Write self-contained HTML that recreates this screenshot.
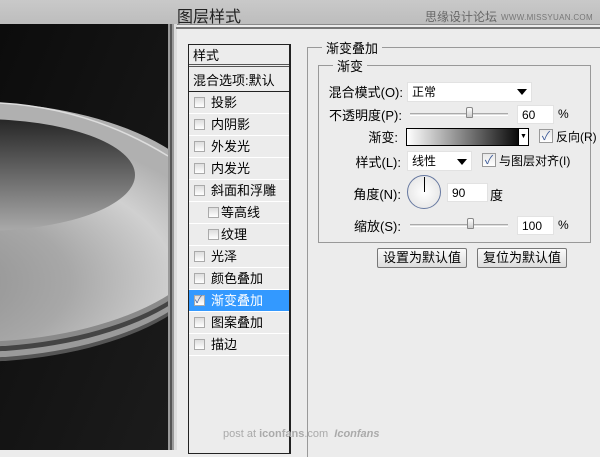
<!DOCTYPE html>
<html><head><meta charset="utf-8"><style>
*{margin:0;padding:0;box-sizing:border-box}
body{width:600px;height:450px;overflow:hidden;background:#ececec;font-family:"Liberation Sans","Noto Sans CJK SC",sans-serif;font-size:13px;color:#000;position:relative}
.abs{position:absolute}
.top{left:0;top:0;width:600px;height:25px;background:linear-gradient(#c9c9c9,#bdbdbd);border-bottom:1px solid #8a8a8a}
.title{left:177px;top:3px;font-size:16px;color:#222}
.wm{left:425px;top:8px;font-size:12px;color:#666}
.wm2{left:501px;top:13px;font-size:8px;color:#777;letter-spacing:.3px}
.list{left:188px;top:44px;width:103px;height:410px;border:1px solid #222;border-right:2px solid #222;background:#ececec}
.it{position:absolute;left:0;width:100px;height:22px;border-bottom:1px solid #fff;line-height:21px;padding-left:22px;font-size:13px}
.cb{position:absolute;left:5px;top:5px;width:11px;height:11px;border:1px solid #aaa;background:linear-gradient(#ddd,#fff)}
.sub{padding-left:32px}.sub .cb{left:19px}
.sel{background:#3399ff;color:#fff}
.fs{border:1px solid #999}
.lbl{position:absolute;background:#ececec;padding:0 4px;font-size:13px}
.r{position:absolute;text-align:right;font-size:13px;left:290px;margin-top:-2px}
.inp{position:absolute;background:#fff;border:1px solid #e2e2e2;font-size:12px;padding-left:4px;line-height:18px}
.tri{position:absolute;width:0;height:0;border-left:5px solid transparent;border-right:5px solid transparent;border-top:6px solid #000}
.slider{position:absolute;height:3px;border-top:1px solid #aaa;border-bottom:1px solid #fff;background:#ddd}
.thumb{position:absolute;width:7px;height:11px;background:linear-gradient(#fff,#ccc);border:1px solid #888;border-radius:2px 2px 1px 1px}
.btn{position:absolute;height:20px;border:1px solid #777;border-radius:2px;background:linear-gradient(#fafafa,#ddd);font-size:13px;text-align:center;line-height:18px}
.chk{position:absolute;width:14px;height:14px;border:1px solid #999;background:linear-gradient(#e8e8e8,#fff);color:#3b5998;font-size:12px;line-height:12px;text-align:center}
</style></head><body>
<div class="abs top"></div>
<div class="abs title">图层样式</div>
<div class="abs wm">思缘设计论坛</div>
<div class="abs wm2">WWW.MISSYUAN.COM</div>
<svg class="abs" style="left:0;top:24px" width="177" height="426">
<defs>
<linearGradient id="bg" x1="0" y1="0" x2="1" y2="1"><stop offset="0" stop-color="#0c0c0c"/><stop offset="1" stop-color="#1c1c1c"/></linearGradient>
<radialGradient id="topd" cx=".35" cy=".75" r=".7"><stop offset="0" stop-color="#888"/><stop offset=".5" stop-color="#a8a8a8"/><stop offset=".8" stop-color="#d0d0d0"/><stop offset="1" stop-color="#b0b0b0"/></radialGradient>
<linearGradient id="inner" x1="0" y1="0" x2="0" y2="1"><stop offset="0" stop-color="#262626"/><stop offset="1" stop-color="#aaaaaa"/></linearGradient>
</defs>
<rect width="177" height="426" fill="url(#bg)"/>
<ellipse cx="-30" cy="218" rx="252" ry="120" fill="#555"/>
<ellipse cx="-30" cy="214" rx="252" ry="120" fill="#9a9a9a"/>
<ellipse cx="-30" cy="208" rx="252" ry="120" fill="#444"/>
<ellipse cx="-30" cy="203" rx="252" ry="120" fill="#8a8a8a"/>
<ellipse cx="-30" cy="198" rx="250" ry="120" fill="url(#topd)"/>
<path d="M0 79 Q90 84 168 132" stroke="#ddd" stroke-width="1.5" fill="none"/>
<ellipse cx="-20" cy="151" rx="155" ry="56" fill="url(#inner)"/>
<rect x="168" y="0" width="9" height="426" fill="#9a9a9a"/>
<rect x="170" y="0" width="2" height="426" fill="#555"/>
<rect x="174" y="0" width="3" height="426" fill="#ddd"/>
</svg>
<div class="abs" style="left:176px;top:27px;width:424px;height:2px;background:#777"></div>
<div class="abs list">
<div class="it" style="top:0;padding-left:4px;height:22px;border-bottom:3px double #555">样式</div>
<div class="it" style="top:25px;padding-left:4px;border-bottom:1px solid #222">混合选项:默认</div>
<div class="it" style="top:47px"><span class="cb"></span>投影</div>
<div class="it" style="top:69px"><span class="cb"></span>内阴影</div>
<div class="it" style="top:91px"><span class="cb"></span>外发光</div>
<div class="it" style="top:113px"><span class="cb"></span>内发光</div>
<div class="it" style="top:135px"><span class="cb"></span>斜面和浮雕</div>
<div class="it sub" style="top:157px"><span class="cb"></span>等高线</div>
<div class="it sub" style="top:179px"><span class="cb"></span>纹理</div>
<div class="it" style="top:201px"><span class="cb"></span>光泽</div>
<div class="it" style="top:223px"><span class="cb"></span>颜色叠加</div>
<div class="it sel" style="top:245px"><span class="cb" style="color:#3b5998;font-size:10px;line-height:9px">✓</span>渐变叠加</div>
<div class="it" style="top:267px"><span class="cb"></span>图案叠加</div>
<div class="it" style="top:289px"><span class="cb"></span>描边</div>
</div>
<div class="abs" style="left:307px;top:47px;width:300px;height:410px;border-left:1px solid #999;border-top:1px solid #999"></div>
<div class="lbl" style="left:322px;top:38px">渐变叠加</div>
<div class="abs fs" style="left:318px;top:65px;width:273px;height:178px"></div>
<div class="lbl" style="left:333px;top:56px">渐变</div>
<div class="r" style="width:113px;top:84px">混合模式(O):</div>
<div class="inp" style="left:407px;top:82px;width:125px;height:20px">正常</div><div class="tri" style="left:517px;top:89px"></div>
<div class="r" style="width:112px;top:107px">不透明度(P):</div>
<div class="slider" style="left:410px;top:113px;width:98px"></div><div class="thumb" style="left:466px;top:107px"></div>
<div class="inp" style="left:517px;top:105px;width:37px;height:19px">60</div><div class="abs" style="left:558px;top:107px;font-size:12px">%</div>
<div class="r" style="width:108px;top:129px">渐变:</div>
<div class="abs" style="left:406px;top:128px;width:123px;height:18px;border:1px solid #000;background:linear-gradient(90deg,#fff,#000 96%)"></div>
<div class="abs" style="left:518px;top:129px;width:10px;height:16px;background:#fff;border-left:1px solid #000;font-size:7px;text-align:center;line-height:16px">▼</div>
<div class="chk" style="left:539px;top:129px">✓</div><div class="abs" style="left:556px;top:128px;font-size:12px">反向(R)</div>
<div class="r" style="width:111px;top:154px">样式(L):</div>
<div class="inp" style="left:407px;top:151px;width:65px;height:20px">线性</div><div class="tri" style="left:457px;top:159px"></div>
<div class="chk" style="left:482px;top:153px">✓</div><div class="abs" style="left:499px;top:152px;font-size:12px">与图层对齐(I)</div>
<div class="r" style="width:111px;top:186px">角度(N):</div>
<div class="abs" style="left:407px;top:175px;width:34px;height:34px;border-radius:50%;border:1px solid #6678a0;background:radial-gradient(#fff,#e0e0e0)"></div>
<div class="abs" style="left:424px;top:177px;width:1px;height:15px;background:#000"></div>
<div class="inp" style="left:447px;top:183px;width:41px;height:19px">90</div><div class="abs" style="left:490px;top:185px;font-size:13px">度</div>
<div class="r" style="width:111px;top:218px">缩放(S):</div>
<div class="slider" style="left:410px;top:224px;width:98px"></div><div class="thumb" style="left:467px;top:218px"></div>
<div class="inp" style="left:517px;top:216px;width:37px;height:19px">100</div><div class="abs" style="left:558px;top:218px;font-size:12px">%</div>
<div class="btn" style="left:377px;top:248px;width:90px">设置为默认值</div>
<div class="btn" style="left:477px;top:248px;width:90px">复位为默认值</div>
<div class="abs" style="left:223px;top:428px;font-size:11px;color:#aaa">post at <b>iconfans</b>.com&nbsp;&nbsp;<i><b>Iconfans</b></i></div>
</body></html>
